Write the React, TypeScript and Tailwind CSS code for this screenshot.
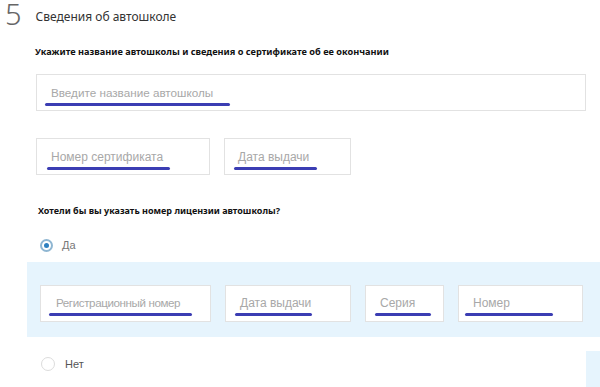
import React from "react";

type FieldProps = {
  label: string;
  box: string;
  textCls: string;
  bar: string;
};

const Field = ({ label, box, textCls, bar }: FieldProps) => (
  <div className={`flex h-[37px] shrink-0 flex-col border border-[#e2e2e2] bg-white ${box}`}>
    <span className={`leading-[14px] whitespace-nowrap text-[#a8a8a8] ${textCls}`}>{label}</span>
    <span className={`mt-[3px] h-[3px] rounded-full bg-[#3b3db3] ${bar}`} />
  </div>
);

const arial = { fontFamily: '"Liberation Sans", Arial, sans-serif' };

export default function App() {
  return (
    <div
      className="relative h-[387px] w-[600px] overflow-hidden bg-white text-[#222]"
      style={{ fontFamily: '"Noto Sans", "Liberation Sans", sans-serif' }}
    >
      <div className="flex items-center pl-[5px] pt-[1px]">
        <span className="text-[29px] font-light leading-[26px] text-[#666]">5</span>
        <span className="ml-[14px] mt-[6px] text-[12px] text-[#333]">Сведения об автошколе</span>
      </div>

      <div className="ml-[35px] mt-[19px] text-[9.2px] font-bold leading-[12px] text-[#111]">
        Укажите название автошколы и сведения о сертификате об ее окончании
      </div>

      <div className="ml-[36px] mt-[16px]" style={arial}>
        <Field label="Введите название автошколы" box="w-[550px] pl-[8px] pt-[11px]" textCls="ml-[6px] text-[11.7px]" bar="w-[185px]" />
      </div>

      <div className="ml-[36px] mt-[27px] flex gap-[14px]" style={arial}>
        <Field label="Номер сертификата" box="w-[174px] pl-[10px] pt-[11px]" textCls="ml-[4px] text-[12px]" bar="w-[123px]" />
        <Field label="Дата выдачи" box="w-[127px] pl-[9px] pt-[11px]" textCls="ml-[4px] text-[12px]" bar="w-[83px]" />
      </div>

      <div className="ml-[38px] mt-[30px] text-[9px] font-bold leading-[12px] text-[#111]">
        Хотели бы вы указать номер лицензии автошколы?
      </div>

      <div className="ml-[40px] mt-[20px] flex items-center" style={arial}>
        <span className="flex h-[13px] w-[13px] items-center justify-center rounded-full border-2 border-[#8fb6d2]">
          <span className="h-[5px] w-[5px] rounded-full bg-[#2f80c0]" />
        </span>
        <span className="ml-[9px] text-[11px] text-[#777]">Да</span>
      </div>

      <div className="ml-[27px] mt-[8px] flex h-[75px] gap-[14px] bg-[#e6f4fd] pl-[13px] pt-[23px]" style={arial}>
        <Field label="Регистрационный номер" box="w-[171px] pl-[8px] pt-[10px]" textCls="ml-[7px] text-[11.6px] tracking-[-0.4px]" bar="w-[143px]" />
        <Field label="Дата выдачи" box="w-[126px] pl-[9px] pt-[10px]" textCls="ml-[5px] text-[12px]" bar="w-[77px]" />
        <Field label="Серия" box="w-[79px] pl-[9px] pt-[10px]" textCls="ml-[5px] text-[12px]" bar="w-[56px]" />
        <Field label="Номер" box="w-[125px] pl-[6px] pt-[10px]" textCls="ml-[8px] text-[12px]" bar="w-[88px]" />
      </div>

      <div className="ml-[41px] mt-[19px] flex items-center" style={arial}>
        <span className="h-[14px] w-[14px] rounded-full border border-[#dcdcdc] bg-white" />
        <span className="ml-[10px] text-[11px] text-[#555]">Нет</span>
      </div>

      <div className="absolute bottom-0 right-0 h-[36px] w-[14px] bg-[#e6f4fd]" />
    </div>
  );
}
